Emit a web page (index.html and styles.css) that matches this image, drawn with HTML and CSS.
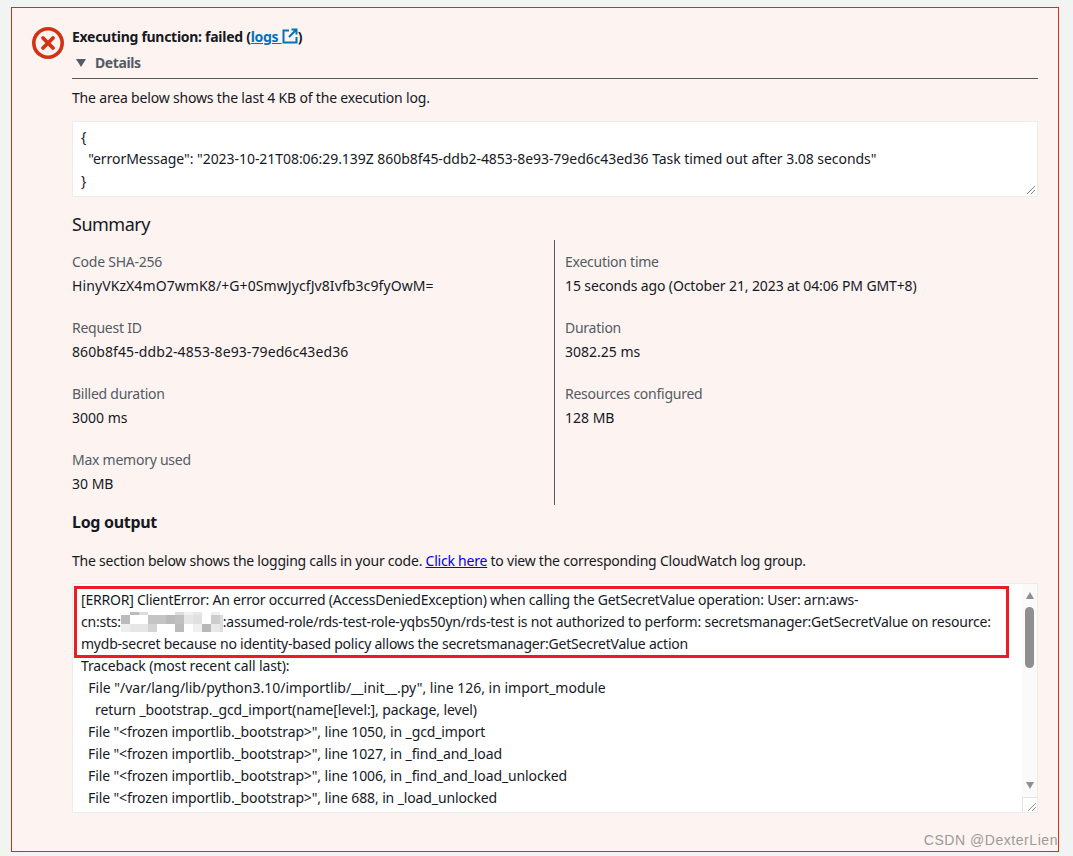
FILE: index.html
```html
<!DOCTYPE html>
<html lang="en">
<head>
<meta charset="utf-8">
<title>Executing function: failed</title>
<link rel="stylesheet" href="styles.css">
</head>
<body>
<main class="alert">
  <svg class="alert-icon" width="34" height="34" viewBox="0 0 34 34" aria-hidden="true">
    <circle cx="17" cy="17" r="14.200" fill="none" stroke="#d13212" stroke-width="3.600"/>
    <path d="M12 12l10 10M22 12L12 22" fill="none" stroke="#d13212" stroke-width="3.800" stroke-linecap="round"/>
  </svg>
  <div class="alert-body">
    <h1 class="alert-title">Executing function: failed (<a class="log-link" href="#">logs <svg class="ext" width="16" height="16" viewBox="0 0 16 16" aria-hidden="true"><path d="M7 2.500H1.500v12h13V9M9.500 1.500h5v5M14.500 1.500L7 9" fill="none" stroke="#0073bb" stroke-width="2"/></svg></a>)</h1>
    <div class="details-head"><span class="caret"></span>Details</div>
    <p class="text first">The area below shows the last 4 KB of the execution log.</p>
    <div class="code-box top-box">
      <pre class="code">{
  "errorMessage": "2023-10-21T08:06:29.139Z 860b8f45-ddb2-4853-8e93-79ed6c43ed36 Task timed out after 3.08 seconds"
}</pre>
      <svg class="grip" width="10" height="10" viewBox="0 0 10 10" aria-hidden="true"><path d="M1 9l8-8M5 9l4-4" stroke="#555" stroke-width="1" stroke-dasharray="1 .4"/></svg>
    </div>
    <h2 class="summary-title">Summary</h2>
    <div class="summary">
      <div class="col">
        <div class="kv"><div class="k">Code SHA-256</div><div class="v v-hex">HinyVKzX4mO7wmK8/+G+0SmwJycfJv8Ivfb3c9fyOwM=</div></div>
        <div class="kv"><div class="k">Request ID</div><div class="v v-hex">860b8f45-ddb2-4853-8e93-79ed6c43ed36</div></div>
        <div class="kv"><div class="k">Billed duration</div><div class="v">3000 ms</div></div>
        <div class="kv"><div class="k">Max memory used</div><div class="v">30 MB</div></div>
      </div>
      <div class="col col-right">
        <div class="kv"><div class="k">Execution time</div><div class="v v-date">15 seconds ago (October 21, 2023 at 04:06 PM GMT+8)</div></div>
        <div class="kv"><div class="k">Duration</div><div class="v">3082.25 ms</div></div>
        <div class="kv"><div class="k">Resources configured</div><div class="v">128 MB</div></div>
      </div>
    </div>
    <h3 class="log-title">Log output</h3>
    <p class="text log-intro">The section below shows the logging calls in your code. <a class="click" href="#">Click here</a> to view the corresponding CloudWatch log group.</p>
    <div class="code-box log-box">
      <div class="log-text">
        <div class="line tight">[ERROR] ClientError: An error occurred (AccessDeniedException) when calling the GetSecretValue operation: User: arn:aws-</div>
        <div class="line tight">cn:sts:<svg class="blur" width="102" height="20" viewBox="0 0 102 20" shape-rendering="crispEdges" aria-hidden="true"><rect x="9" width="9" height="3" fill="#bbb"/><rect x="18" width="9" height="3" fill="#ddd"/><rect x="54" width="9" height="3" fill="#ddd"/><rect x="63" width="9" height="3" fill="#f0f0f0"/><rect x="72" width="9" height="3" fill="#e8e8e8"/><rect x="90" width="9" height="3" fill="#eee"/><rect y="3" width="9" height="9" fill="#bbb"/><rect x="27" y="3" width="18" height="9" fill="#c4c4c4"/><rect x="45" y="3" width="9" height="9" fill="#bbb"/><rect x="54" y="3" width="9" height="9" fill="#c0c0c0"/><rect x="63" y="3" width="9" height="9" fill="#e6e6e6"/><rect x="72" y="3" width="9" height="9" fill="#e0e0e0"/><rect x="90" y="3" width="9" height="9" fill="#ccc"/><rect x="99" y="3" width="3" height="9" fill="#ddd"/><rect y="12" width="9" height="8" fill="#eee"/><rect x="9" y="12" width="18" height="8" fill="#e6e6e6"/><rect x="27" y="12" width="9" height="8" fill="#d4d4d4"/><rect x="54" y="12" width="9" height="8" fill="#bbb"/><rect x="72" y="12" width="9" height="8" fill="#f0f0f0"/><rect x="81" y="12" width="9" height="8" fill="#b8b8b8"/><rect x="90" y="12" width="9" height="8" fill="#e8e8e8"/><rect x="99" y="12" width="3" height="8" fill="#ddd"/></svg>:assumed-role/rds-test-role-yqbs50yn/rds-test is not authorized to perform: secretsmanager:GetSecretValue on resource:</div>
        <div class="line tight">mydb-secret because no identity-based policy allows the secretsmanager:GetSecretValue action</div>
        <div class="line trace">Traceback (most recent call last):</div>
        <div class="line">  File "/var/lang/lib/python3.10/importlib/__init__.py", line 126, in import_module</div>
        <div class="line trace">    return _bootstrap._gcd_import(name[level:], package, level)</div>
        <div class="line trace">  File "&lt;frozen importlib._bootstrap&gt;", line 1050, in _gcd_import</div>
        <div class="line trace">  File "&lt;frozen importlib._bootstrap&gt;", line 1027, in _find_and_load</div>
        <div class="line trace">  File "&lt;frozen importlib._bootstrap&gt;", line 1006, in _find_and_load_unlocked</div>
        <div class="line trace">  File "&lt;frozen importlib._bootstrap&gt;", line 688, in _load_unlocked</div>
      </div>
      <div class="scrollbar">
        <span class="arrow-up"></span>
        <span class="thumb"></span>
        <span class="arrow-down"></span>
        <span class="corner"><svg width="10" height="10" viewBox="0 0 10 10" aria-hidden="true"><path d="M1 9l8-8M5 9l4-4" stroke="#666" stroke-width="1" stroke-dasharray="1 .4"/></svg></span>
      </div>
      <div class="highlight"></div>
    </div>
  </div>
  <div class="watermark">CSDN @DexterLien</div>
</main>
</body>
</html>
```

FILE: styles.css
```css
* { box-sizing: border-box; }
html, body { height: 100%; }
body {
  margin: 0;
  padding: 7px 14px 4px 11px;
  background: #f2f3f3;
  font-family: "Noto Sans", "Open Sans", sans-serif;
  font-size: 14px;
  line-height: 22px;
  color: #16191f;
  overflow: hidden;
}
.alert {
  position: relative;
  display: flex;
  height: 845px;
  background: #fdf3f1;
  border: 1px solid #d13212;
  padding: 18px 20px 0 19px;
  gap: 7px;
}
.alert-icon { flex: none; }
.alert-body { flex: 1; min-width: 0; }
.alert-title { margin: 0; font-size: 14px; font-weight: 700; line-height: 22px; letter-spacing: -.28px; }
.log-link { color: #0073bb; text-decoration: underline; }
.ext { vertical-align: -2px; }
.details-head {
  display: flex;
  align-items: center;
  margin-top: 4px;
  height: 27px;
  border-bottom: 1px solid #545b64;
  padding-bottom: 4px;
  font-weight: 700;
  color: #545b64;
  letter-spacing: -.4px;
}
.caret {
  width: 0; height: 0;
  margin: 0 9px 0 4px;
  border-left: 5.500px solid transparent;
  border-right: 5.500px solid transparent;
  border-top: 8px solid #545b64;
}
.text { margin: 0; color: #16191f; }
.first { margin-top: 8px; letter-spacing: -.18px; }
.code-box {
  position: relative;
  background: #fff;
  border: 1px solid #eaeded;
}
.code { margin: 0; font: inherit; white-space: pre-wrap; }
.top-box { height: 76px; margin-top: 12px; padding: 4px 8px; letter-spacing: -.05px; }
.grip { position: absolute; right: 1px; bottom: 1px; }
.summary-title { margin: 16px 0 0; font-size: 18px; font-weight: 400; line-height: 22px; letter-spacing: -.5px; }
.summary { display: grid; grid-template-columns: 482px 1fr; margin-top: 5px; height: 265px; }
.col { padding-top: 11px; display: flex; flex-direction: column; gap: 20px; }
.col-right { border-left: 1px solid #545b64; padding-left: 10px; }
.k { color: #545b64; letter-spacing: -.25px; }
.v { margin-top: 2px; }
.v-hex { letter-spacing: .09px; }
.v-date { letter-spacing: -.12px; }
.log-title { margin: 6px 0 0; font-size: 16px; font-weight: 700; line-height: 22px; letter-spacing: -.3px; }
.log-intro { margin-top: 17px; letter-spacing: -.23px; }
.click { color: #0000ee; text-decoration: underline; }
.log-box { display: flex; height: 230px; margin-top: 11px; overflow: hidden; }
.log-text { flex: 1; padding: 5px 0 0 8px; min-width: 0; }
.line { height: 22px; white-space: pre; }
.tight { letter-spacing: -.22px; }
.trace { letter-spacing: -.12px; }
.highlight {
  position: absolute;
  left: 1px;
  top: 2px;
  width: 935px;
  height: 72px;
  border: 3px solid #ed1c24;
}
.blur { vertical-align: -5px; }
.scrollbar { position: relative; flex: none; width: 15px; background: #fafafa; display: flex; flex-direction: column; align-items: center; }
.arrow-up { width: 0; height: 0; margin-top: 8px; border-left: 4.500px solid transparent; border-right: 4.500px solid transparent; border-bottom: 7px solid #8f8f8f; }
.thumb { width: 9px; height: 61px; margin-top: 8px; background: #8f8f8f; border-radius: 4.500px; }
.arrow-down { width: 0; height: 0; margin-top: 114px; border-left: 4.500px solid transparent; border-right: 4.500px solid transparent; border-top: 7px solid #8f8f8f; }
.corner { position: absolute; right: 0; bottom: 0; width: 15px; height: 15px; background: #fff; border: 1px solid #e4e4e4; border-right: 0; border-bottom: 0; display: flex; align-items: flex-end; justify-content: flex-end; }
.watermark {
  position: absolute;
  right: 0;
  bottom: 2px;
  font-family: "Liberation Sans", sans-serif;
  font-size: 14px;
  line-height: 18px;
  letter-spacing: .55px;
  color: #9a9a9a;
  white-space: nowrap;
}
```
